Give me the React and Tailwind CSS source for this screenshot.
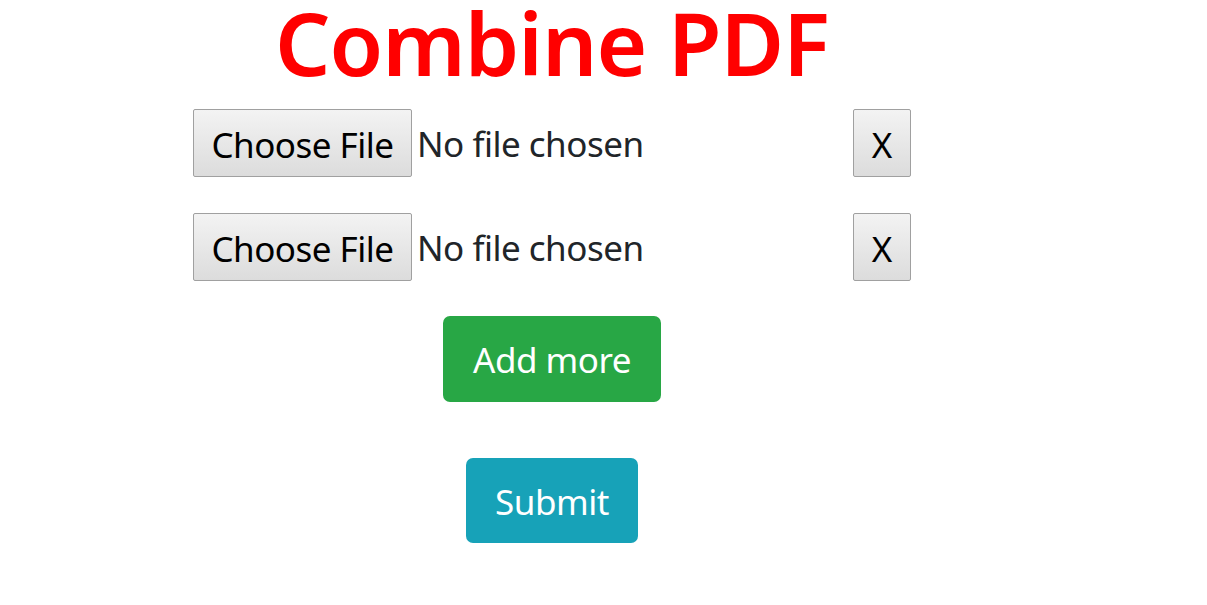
export default function App() {
  const rows = [0, 1]

  return (
    <div className="w-[1104px] flex flex-col items-center font-['Noto_Sans',sans-serif] text-[#212529] bg-white">
      {/* Title */}
      <h1 className="pt-[3px] h-[81px] leading-[78px] text-[87px] font-semibold text-[#ff0000] tracking-[-1px]">
        Combine PDF
      </h1>

      {/* File rows */}
      <div className="mt-[28px] flex flex-col gap-[36px]">
        {rows.map((r) => (
          <div key={r} className="flex items-center">
            <div className="w-[656px] flex items-center">
              <button className="w-[219px] h-[68px] pt-[2px] border border-[#a0a0a0] rounded-[2px] bg-gradient-to-b from-[#f3f3f3] to-[#dcdcdc] text-black text-[35px] leading-none tracking-[-0.5px]">
                Choose File
              </button>
              <span className="ml-[5px] mt-[3px] text-[35px] tracking-[-0.5px] text-[#212529]">No file chosen</span>
            </div>
            <button className="ml-[4px] w-[58px] h-[68px] pt-[2px] border border-[#a0a0a0] rounded-[2px] bg-gradient-to-b from-[#f3f3f3] to-[#dcdcdc] text-black text-[35px] leading-none">
              X
            </button>
          </div>
        ))}
      </div>

      {/* Add more */}
      <button className="mt-[35px] w-[218px] h-[86px] pt-[3px] rounded-[7px] bg-[#28a745] text-white text-[35px] tracking-[-0.5px]">
        Add more
      </button>

      {/* Submit */}
      <button className="mt-[56px] w-[172px] h-[85px] pt-[3px] rounded-[7px] bg-[#17a2b8] text-white text-[35px] tracking-[-0.5px]">
        Submit
      </button>
    </div>
  )
}
